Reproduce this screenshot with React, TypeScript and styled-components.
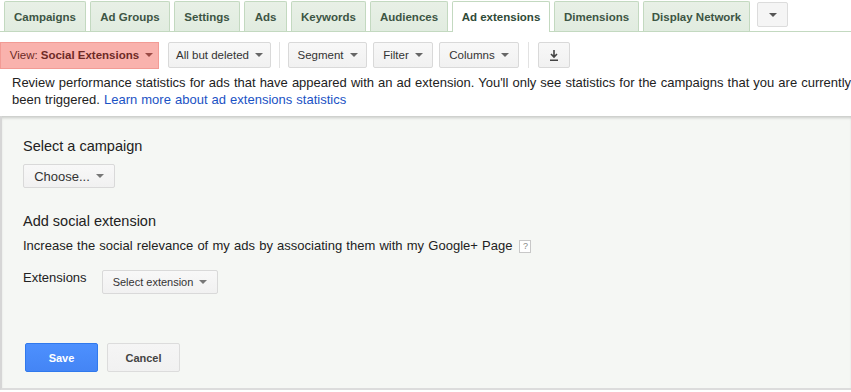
import React from "react";
import styled, { createGlobalStyle } from "styled-components";

const Global = createGlobalStyle`
  html, body { margin: 0; padding: 0; background: #fff; }
  body { font-family: Arial, "Liberation Sans", Helvetica, sans-serif; overflow: hidden; }
  #root { width: 851px; height: 392px; overflow: hidden; }
`;

const Page = styled.div`
  width: 851px;
  height: 392px;
  display: flex;
  flex-direction: column;
  background: #fff;
`;

const TabBar = styled.div`
  display: flex;
  align-items: flex-end;
  height: 32px;
  padding-left: 4px;
  gap: 4px;
  border-bottom: 1px solid #c3d9c0;
  box-sizing: border-box;
  flex-shrink: 0;
`;

const Tab = styled.div<{ $active?: boolean; $w: number }>`
  width: ${(p) => p.$w}px;
  box-sizing: border-box;
  display: flex;
  align-items: center;
  justify-content: center;
  font-size: 11.5px;
  font-weight: bold;
  color: ${(p) => (p.$active ? "#2f4a37" : "#3d5544")};
  background: ${(p) => (p.$active ? "#fff" : "linear-gradient(#e8f0e6, #e1ece0)")};
  border: 1px solid #c3d9c0;
  border-bottom: none;
  border-radius: 2px 2px 0 0;
  margin-bottom: ${(p) => (p.$active ? "-1px" : "0")};
  height: ${(p) => (p.$active ? "31px" : "30px")};
  padding-bottom: ${(p) => (p.$active ? "1px" : "0")};
`;

const MoreTab = styled.div`
  width: 31px;
  height: 25px;
  margin-left: 3px;
  margin-bottom: 4px;
  box-sizing: border-box;
  border: 1px solid #dcdcdc;
  border-radius: 2px;
  background: #f5f5f5;
  display: flex;
  align-items: center;
  justify-content: center;
`;

const Caret = styled.span<{ $color?: string; $ml?: number }>`
  display: inline-block;
  width: 0;
  height: 0;
  border-left: 4px solid transparent;
  border-right: 4px solid transparent;
  border-top: 4px solid ${(p) => p.$color || "#666"};
  margin-left: ${(p) => p.$ml ?? 6}px;
  vertical-align: middle;
`;

const Toolbar = styled.div`
  display: flex;
  align-items: center;
  height: 28px;
  margin-top: 9px;
  flex-shrink: 0;
`;

const ToolButton = styled.div<{ $w: number; $ml?: number }>`
  width: ${(p) => p.$w}px;
  height: 26px;
  margin-left: ${(p) => p.$ml ?? 6}px;
  box-sizing: border-box;
  border: 1px solid #d9d9d9;
  border-radius: 2px;
  background: linear-gradient(#f8f8f8, #f1f1f1);
  display: flex;
  align-items: center;
  justify-content: center;
  font-size: 11.5px;
  color: #333;
`;

const ViewButton = styled.div`
  width: 159px;
  height: 27px;
  box-sizing: border-box;
  background: #f9b2ad;
  border: 1px solid #f29b95;
  display: flex;
  align-items: center;
  justify-content: center;
  padding-left: 4px;
  font-size: 11.5px;
  color: #6e2a26;
  b { margin-left: 3px; }
`;

const Sep = styled.div<{ $ml: number }>`
  width: 1px;
  height: 26px;
  background: #e2e2e2;
  margin-left: ${(p) => p.$ml}px;
`;

const Intro = styled.div`
  padding: 5px 12px 0 12px;
  font-size: 13px;
  line-height: 17px;
  word-spacing: 0.45px;
  color: #222;
  height: 47px;
  box-sizing: border-box;
  white-space: nowrap;
  flex-shrink: 0;
  a { color: #1a52c4; text-decoration: none; }
`;

const Panel = styled.div`
  flex: 1;
  margin-bottom: 2px;
  background: #f5f7f4;
  border-left: 2px solid #d6d6d6;
  box-shadow: inset 0 3px 3px -1px rgba(0, 0, 0, 0.18);
  border-bottom: 2px solid #dcdcdc;
  padding: 21px 0 0 21px;
  display: flex;
  flex-direction: column;
`;

const Heading = styled.div`
  font-size: 14.5px;
  color: #222;
  line-height: 18px;
`;

const Body = styled.div`
  font-size: 13px;
  word-spacing: 0.6px;
  color: #222;
  line-height: 16px;
  display: flex;
  align-items: center;
`;

const Help = styled.span`
  display: inline-flex;
  align-items: center;
  justify-content: center;
  width: 10px;
  height: 11px;
  border: 1px solid #c8c8c8;
  background: #fff;
  font-size: 9px;
  color: #888;
  margin-left: 7px;
  word-spacing: 0;
`;

const SelectButton = styled.div<{ $w: number; $fs: number }>`
  width: ${(p) => p.$w}px;
  height: 24px;
  box-sizing: border-box;
  border: 1px solid #d9d9d9;
  border-radius: 2px;
  background: linear-gradient(#f8f8f8, #f1f1f1);
  display: flex;
  align-items: center;
  justify-content: center;
  font-size: ${(p) => p.$fs}px;
  color: #333;
`;

const Row = styled.div`
  display: flex;
  align-items: flex-start;
`;

const Label = styled.div`
  font-size: 13px;
  color: #222;
  width: 79px;
`;

const Actions = styled.div`
  display: flex;
  gap: 9px;
  margin-left: 2px;
`;

const ActionButton = styled.div<{ $primary?: boolean }>`
  width: 73px;
  height: 29px;
  box-sizing: border-box;
  border-radius: 2px;
  display: flex;
  align-items: center;
  justify-content: center;
  font-size: 11px;
  font-weight: bold;
  color: ${(p) => (p.$primary ? "#fff" : "#444")};
  background: ${(p) => (p.$primary ? "linear-gradient(#4d90fe, #4485f5)" : "linear-gradient(#f5f5f5, #f1f1f1)")};
  border: 1px solid ${(p) => (p.$primary ? "#3079ed" : "#dcdcdc")};
`;

const Spacer = styled.div<{ $h: number }>`
  height: ${(p) => p.$h}px;
  flex-shrink: 0;
`;

const tabs: [string, number][] = [
  ["Campaigns", 82],
  ["Ad Groups", 80],
  ["Settings", 66],
  ["Ads", 43],
  ["Keywords", 75],
  ["Audiences", 78],
  ["Ad extensions", 98],
  ["Dimensions", 85],
  ["Display Network", 107],
];

export default function App() {
  return (
    <Page>
      <Global />
      <TabBar>
        {tabs.map(([t, w]) => (
          <Tab key={t} $w={w} $active={t === "Ad extensions"}>
            {t}
          </Tab>
        ))}
        <MoreTab>
          <Caret $color="#555" $ml={0} />
        </MoreTab>
      </TabBar>
      <Toolbar>
        <ViewButton>
          View:<b>Social Extensions</b>
          <Caret $color="#9a4a45" />
        </ViewButton>
        <ToolButton $w={103} $ml={9}>
          All but deleted
          <Caret />
        </ToolButton>
        <Sep $ml={8} />
        <ToolButton $w={79} $ml={8}>
          Segment
          <Caret />
        </ToolButton>
        <ToolButton $w={60}>
          Filter
          <Caret />
        </ToolButton>
        <ToolButton $w={80}>
          Columns
          <Caret />
        </ToolButton>
        <Sep $ml={9} />
        <ToolButton $w={32} $ml={9}>
          <svg width="10" height="11" viewBox="0 0 10 11">
            <path d="M5 0 V7 M2 4 L5 7 L8 4" stroke="#444" strokeWidth="1.6" fill="none" />
            <rect x="1" y="9.5" width="8" height="1.5" fill="#444" />
          </svg>
        </ToolButton>
      </Toolbar>
      <Intro>
        Review performance statistics for ads that have appeared with an ad extension. You'll only see statistics for the campaigns that you are currently
        <br />
        been triggered. <a href="#">Learn more about ad extensions statistics</a>
      </Intro>
      <Panel>
        <Heading>Select a campaign</Heading>
        <Spacer $h={9} />
        <SelectButton $w={92} $fs={13}>
          Choose...
          <Caret $color="#777" />
        </SelectButton>
        <Spacer $h={24} />
        <Heading>Add social extension</Heading>
        <Spacer $h={8} />
        <Body>
          Increase the social relevance of my ads by associating them with my Google+ Page
          <Help>?</Help>
        </Body>
        <Spacer $h={16} />
        <Row>
          <Label>Extensions</Label>
          <SelectButton $w={116} $fs={11}>
            Select extension
            <Caret $color="#777" />
          </SelectButton>
        </Row>
        <Spacer $h={49} />
        <Actions>
          <ActionButton $primary>Save</ActionButton>
          <ActionButton>Cancel</ActionButton>
        </Actions>
      </Panel>
    </Page>
  );
}
